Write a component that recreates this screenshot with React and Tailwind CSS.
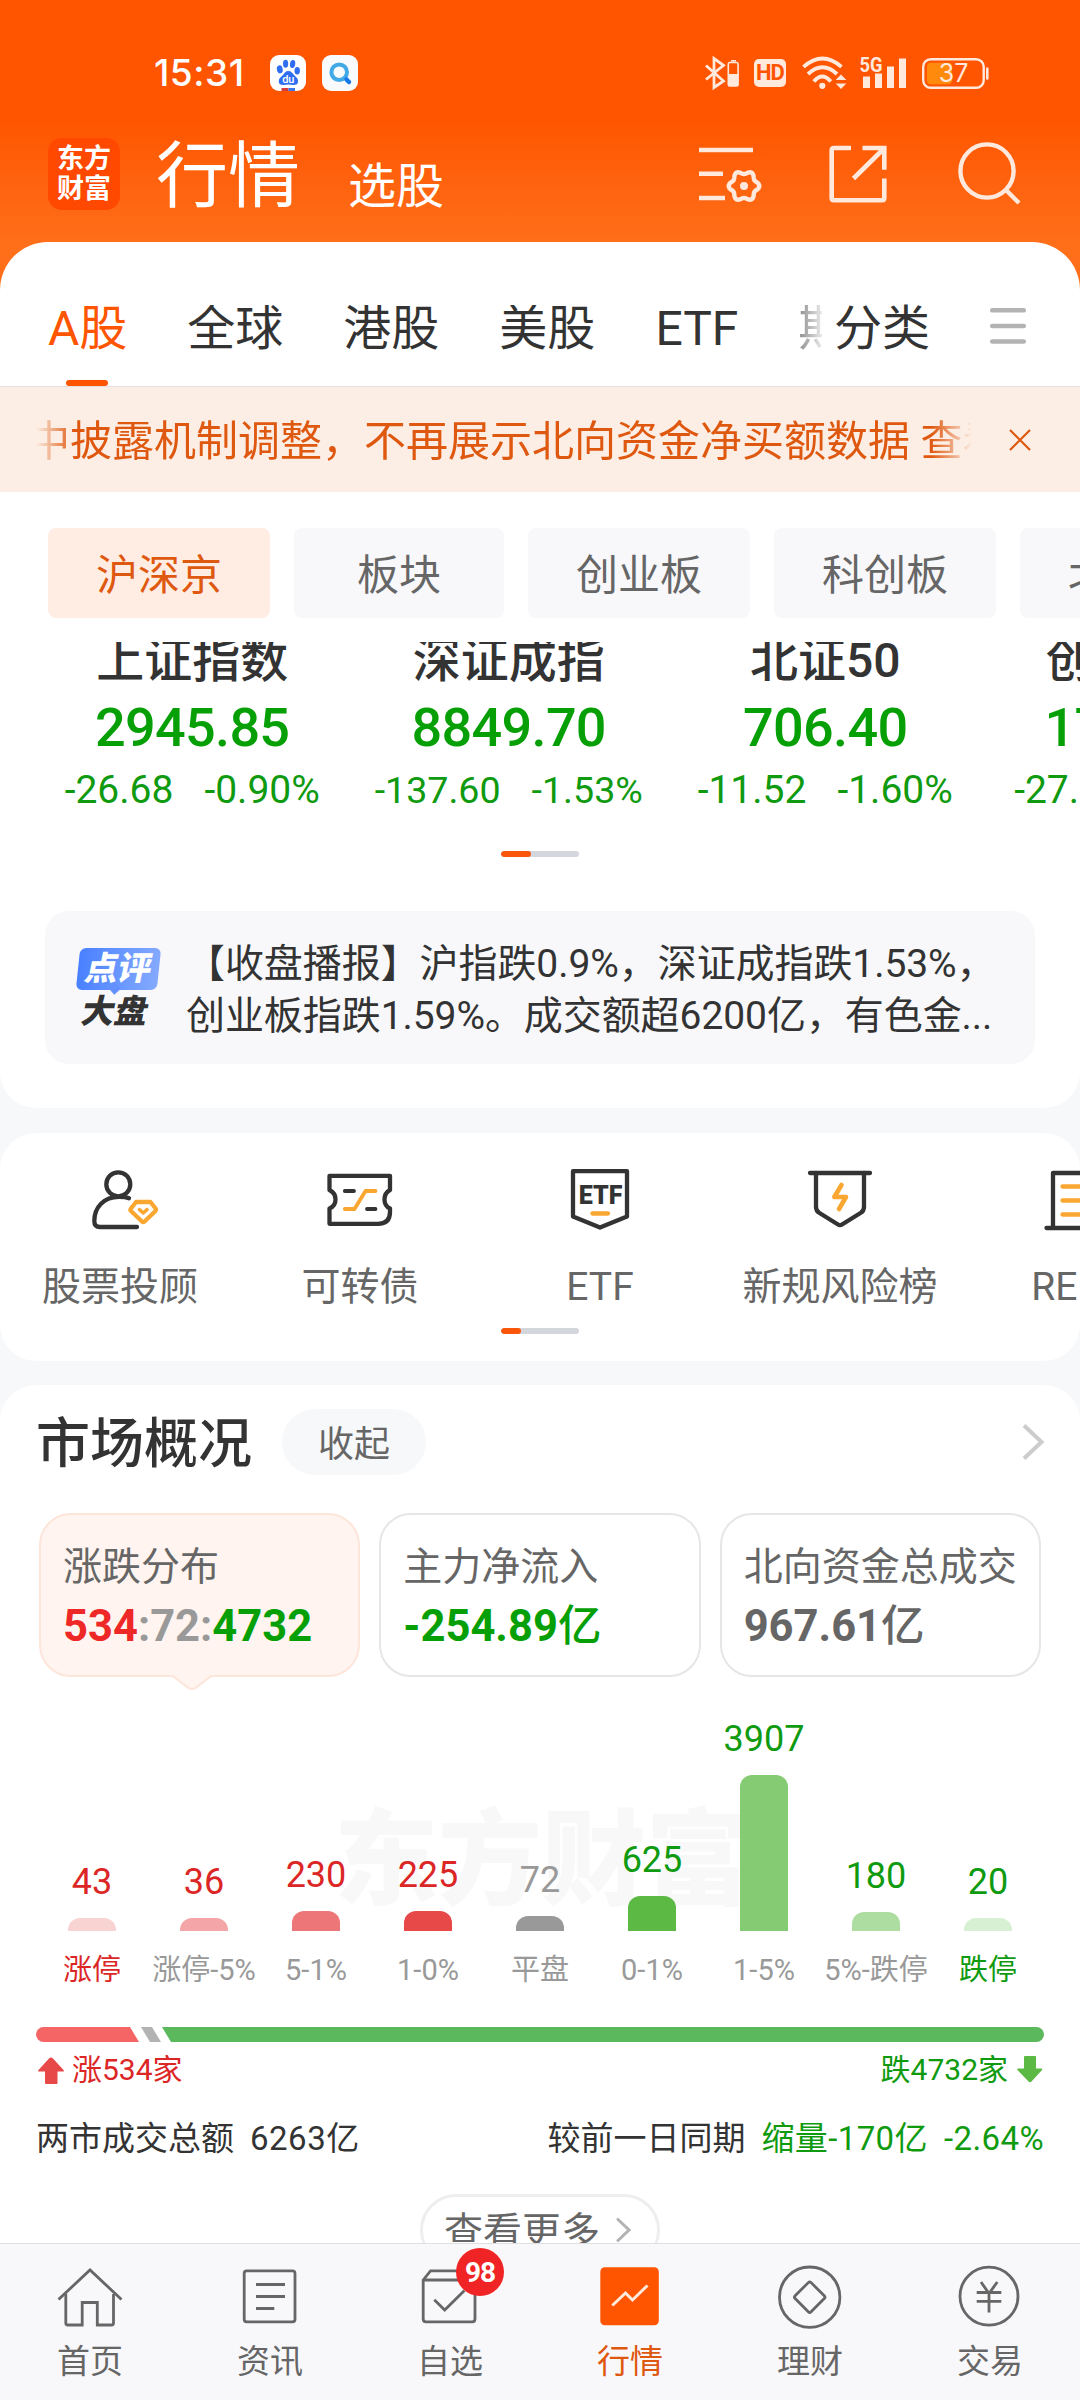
import React from 'react';

const up = '#dc2626';
const down = '#0f9a0f';

const indices = [
  { name: '上证指数', price: '2945.85', change: '-26.68', percent: '-0.90%' },
  { name: '深证成指', price: '8849.70', change: '-137.60', percent: '-1.53%', compact: true },
  { name: '北证50', price: '706.40', change: '-11.52', percent: '-1.60%' },
  { name: '创业板指', price: '1728.03', change: '-27.83', percent: '-1.59%' },
];

const distribution = [
  { label: '涨停', value: 43, height: 13, bar: '#f9d2d2', color: up, labelColor: up },
  { label: '涨停-5%', value: 36, height: 13, bar: '#f4a5a7', color: up },
  { label: '5-1%', value: 230, height: 20, bar: '#ed7778', color: up },
  { label: '1-0%', value: 225, height: 20, bar: '#e74848', color: up },
  { label: '平盘', value: 72, height: 15, bar: '#999999', color: '#999999' },
  { label: '0-1%', value: 625, height: 35, bar: '#5cb944', color: down },
  { label: '1-5%', value: 3907, height: 156, bar: '#85cb74', color: down },
  { label: '5%-跌停', value: 180, height: 19, bar: '#aedda2', color: down },
  { label: '跌停', value: 20, height: 13, bar: '#d7efd2', color: down, labelColor: down },
];

// six-lobed cog outline
const cogPath = Array.from({ length: 72 }, (_, i) => {
  const a = (i / 72) * Math.PI * 2;
  const r = 13.6 + 1.7 * Math.cos(a * 6);
  return `${i ? 'L' : 'M'}${(45 + r * Math.cos(a)).toFixed(2)} ${(42 + r * Math.sin(a)).toFixed(2)}`;
}).join('') + 'Z';

const Icon = ({ children, ...props }) => (
  <svg width="72" height="72" viewBox="0 0 72 72" fill="none" className="block shrink-0 overflow-visible" {...props}>
    {children}
  </svg>
);

const LineIcon = ({ children }) => <Icon stroke="#666666" strokeWidth="2.8">{children}</Icon>;

const ToolIcon = ({ children }) => (
  <Icon stroke="#333333" strokeWidth="4.3" strokeLinecap="round" strokeLinejoin="round">{children}</Icon>
);

const tools = [
  {
    label: '股票投顾',
    icon: (
      <ToolIcon>
        <circle cx="34.3" cy="20.3" r="12" />
        <path d="M45 34.2C42 33 38.5 32.8 35 32.8C20 32.8 10.3 43 10.3 57Q10.3 63 16 63H53" />
        <path d="M52 38H66.5L72 45Q72.5 46 71.5 47L60.5 57.5Q59.2 58.5 58 57.5L47 47Q46 46 46.6 45Z" stroke="#faa732" />
        <path d="M55.5 45.7L59.2 49L63 45.7" stroke="#faa732" strokeWidth="3.6" />
      </ToolIcon>
    ),
  },
  {
    label: '可转债',
    icon: (
      <ToolIcon>
        <path d="M5.5 11.8H66V26Q60.5 29 60.5 35.5Q60.5 42 66 44.5V48Q66 59.8 54 59.8H5.5V44.5Q11.5 42 11.5 35.5Q11.5 29 5.5 26Z" />
        <path d="M20.8 27H30M43 45H51.5" strokeWidth="3.8" />
        <path d="M20.8 45H30.5L41.5 27H51.5" stroke="#faa732" strokeWidth="3.8" />
      </ToolIcon>
    ),
  },
  {
    label: 'ETF',
    icon: (
      <ToolIcon>
        <path d="M9 7.2H63V52.5L36 63.5L9 52.5Z" />
        <text x="36.5" y="39.5" fontSize="25" fontWeight="900" fill="#333333" stroke="none" textAnchor="middle">ETF</text>
        <path d="M28.5 49.5H44" stroke="#faa732" />
      </ToolIcon>
    ),
  },
  {
    label: '新规风险榜',
    icon: (
      <ToolIcon>
        <path d="M6 9H66" />
        <path d="M12 9V43Q12 47 15.5 49L34 60.5Q36 61.8 38 60.5L56.5 49Q60 47 60 43V9" />
        <path d="M37.5 21L30.3 33H42L35 45" stroke="#faa732" strokeWidth="4.6" />
      </ToolIcon>
    ),
  },
  {
    label: 'REITs',
    icon: (
      <ToolIcon>
        <path d="M9 64V9H63V64M2.5 64H70" />
        <path d="M18.5 22.5H54M18.5 36.5H54M18.5 50.5H54" stroke="#faa732" />
      </ToolIcon>
    ),
  },
];

const navItems = [
  {
    label: '首页',
    icon: (
      <LineIcon>
        <path d="M4.5 39.5L36 10L67.5 39.5" />
        <path d="M11.8 34V63Q11.8 65 13.8 65H28.2V42.5H43.3V65H57.5Q59.5 65 59.5 63V34" />
      </LineIcon>
    ),
  },
  {
    label: '资讯',
    icon: (
      <LineIcon>
        <rect x="10.2" y="10.8" width="50.8" height="51" rx="2.5" />
        <path d="M22 24.5H51M22 36.5H51M22 48.5H40.3" />
      </LineIcon>
    ),
  },
  {
    label: '自选',
    badge: 98,
    icon: (
      <LineIcon>
        <path d="M9.2 20L16.5 10.8H53.5L61 20V59Q61 61.8 58.2 61.8H12Q9.2 61.8 9.2 59ZM9.2 20H61" />
        <path d="M20.3 39.8L30.7 50L50.5 30.5" />
      </LineIcon>
    ),
  },
  {
    label: '行情',
    active: true,
    icon: (
      <Icon>
        <rect x="6.3" y="7.3" width="58.5" height="58" rx="4.5" fill="#ff5500" />
        <path d="M18.3 45.5L31.5 33L38.5 40L53.5 25.5" stroke="#ffeade" strokeWidth="3" />
      </Icon>
    ),
  },
  {
    label: '理财',
    icon: (
      <LineIcon>
        <circle cx="35.7" cy="37.2" r="30.2" />
        <rect x="24.4" y="25.9" width="22.6" height="22.6" rx="2" transform="rotate(45 35.7 37.2)" />
      </LineIcon>
    ),
  },
  {
    label: '交易',
    icon: (
      <LineIcon>
        <circle cx="35" cy="36.2" r="29" />
        <path d="M27 22L35 33.5L43.3 22M35 32V52.5M22.7 32.5H47.3M22.7 41.3H47.3" />
      </LineIcon>
    ),
  },
];

const Pager = ({ className, thumb }) => (
  <div className={`mx-auto h-1.5 w-[78px] overflow-hidden rounded-full bg-[#d3d6dc] ${className}`}>
    <div className={`h-full rounded-full bg-[#f9560b] ${thumb}`} />
  </div>
);

function StatusBar() {
  return (
    <div className="mt-[49px] flex h-12 items-center pl-[154px] pr-[91px]">
      <span className="w-[116px] font-['Inter'] text-[37px] font-medium leading-[48px] tracking-[0.5px]">15:31</span>
      <svg width="36" height="36" viewBox="0 0 36 36" className="mr-4 rounded-[9px]">
        <rect width="36" height="36" fill="#ffffff" />
        <g fill="#2f6ef0">
          <ellipse cx="9.8" cy="14.3" rx="2.9" ry="4" transform="rotate(-12 9.8 14.3)" />
          <ellipse cx="15.6" cy="8.8" rx="2.6" ry="4" />
          <ellipse cx="22.6" cy="9" rx="2.6" ry="4" transform="rotate(10 22.6 9)" />
          <ellipse cx="27.2" cy="15.8" rx="2.7" ry="3.7" />
          <path d="M18.3 16C21 16 22.5 18 24 20C26 22 28.5 23.5 28 27C27.5 30.5 24 30.3 18.3 29.6C13 30.3 9.3 30.5 8.8 27C8.4 23.5 11 22 13 20C14.5 18 15.6 16 18.3 16Z" />
        </g>
        <text x="18.3" y="28" fontSize="11" fontWeight="500" fill="#ffffff" textAnchor="middle">du</text>
        <rect x="11.5" y="33" width="7" height="3" fill="#d93a3a" />
        <rect x="18.5" y="33" width="6.5" height="3" fill="#3f73e8" />
      </svg>
      <svg width="36" height="36" viewBox="0 0 36 36" fill="none" className="rounded-[9px]">
        <rect width="36" height="36" fill="#f9fafc" />
        <circle cx="17.2" cy="17.2" r="7.8" stroke="#41a9e6" strokeWidth="4" />
        <path d="M24.5 24.5L27 27" stroke="#1677e8" strokeWidth="4.5" strokeLinecap="round" />
      </svg>
      <div className="ml-auto flex items-center text-[#ffe8dc]">
        <svg width="36" height="36" viewBox="0 0 36 36" fill="none" stroke="currentColor" className="mr-[13px]">
          <path d="M1 10.5L18.5 26L9 32.5V3.5L18.5 10.3L1 24.5" strokeWidth="2.8" />
          <rect x="23.3" y="7.5" width="9.8" height="23.5" rx="1.5" strokeWidth="1.6" />
          <path d="M26 5.8H31" strokeWidth="1.6" />
          <path d="M23.3 19H33.1V31H23.3Z" fill="currentColor" stroke="none" />
        </svg>
        <span className="mr-4 flex h-7 w-8 items-center justify-center rounded-[5px] bg-[#ffe8dc] text-[22px] font-bold leading-7 tracking-[-1px] text-[#ff5500]">HD</span>
        <svg width="45" height="36" viewBox="0 0 45 36" fill="none" stroke="currentColor" strokeWidth="3.8" className="mr-[13px]">
          <path d="M1.5 11.8Q20.5 -5 39.5 11.8M6 19Q20.5 5.5 35 19M11.8 26.5Q20.3 16.5 28.8 26.5" />
          <path d="M39 19.5L44.3 25H33.7ZM39 34L44.3 28.5H33.7Z" fill="currentColor" stroke="none" />
          <circle cx="20.3" cy="30.8" r="3.1" fill="currentColor" stroke="none" />
        </svg>
        <svg width="46" height="36" viewBox="0 0 46 36" fill="currentColor" className="mr-4">
          <text x="-0.5" y="17" fontSize="21" fontWeight="700" textLength="23" lengthAdjust="spacingAndGlyphs">5G</text>
          <path d="M3 21.5H10V33H3ZM15 18.5H22V33H15ZM27 11.5H34V33H27ZM39 3.5H46V33H39Z" />
        </svg>
        <svg width="67" height="36" viewBox="0 0 67 36" fill="none" stroke="currentColor">
          <rect x="1.2" y="4.2" width="60.5" height="28.6" rx="7.5" strokeWidth="2.4" />
          <rect x="5" y="7.7" width="25" height="21.5" rx="4" fill="#ff8a0c" stroke="none" />
          <path d="M65.3 13.5V23.5" strokeWidth="2.6" strokeLinecap="round" />
          <text x="31.5" y="27" fontSize="25" fill="currentColor" stroke="none" textAnchor="middle" className="font-['Inter']">37</text>
        </svg>
      </div>
    </div>
  );
}

function Header() {
  return (
    <div className="flex h-[145px] items-start pl-12 pr-[58px] pt-[41px]">
      <div className="flex size-[72px] flex-col items-center justify-center rounded-[14px] bg-[#ff4800] text-[27px] font-bold leading-[30px]">
        <span>东方</span>
        <span>财富</span>
      </div>
      <h1 className="ml-9 w-[144px] text-[72px] leading-[78px]">行情</h1>
      <span className="ml-12 mt-6 text-[48px] leading-[50px]">选股</span>
      <svg width="64" height="64" viewBox="0 0 64 64" fill="none" stroke="#ffe8dc" strokeWidth="4.6" className="ml-auto mt-1.5">
        <path d="M0 6H54M0 29.8H24M0 54H26" />
        <path d={cogPath} strokeWidth="4.4" />
        <circle cx="45" cy="42" r="4" fill="#ffe8dc" stroke="none" />
      </svg>
      <svg width="58" height="58" viewBox="0 0 58 58" fill="none" stroke="#ffe8dc" strokeWidth="4.6" className="ml-[66px] mt-[7px]">
        <path d="M22 3H5Q2.7 3 2.7 5.3V53Q2.7 55.3 5 55.3H53Q55.3 55.3 55.3 53V33.5" />
        <path d="M33.5 3H55.3V24.8M24.5 33.5L54 4.5" />
      </svg>
      <svg width="64" height="64" viewBox="0 0 64 64" fill="none" stroke="#ffe8dc" strokeWidth="4.4" className="ml-[71px] mt-1">
        <circle cx="29" cy="29" r="26.6" />
        <path d="M47.5 47.5L61 61" />
      </svg>
    </div>
  );
}

function MarketTabs() {
  return (
    <div className="flex h-[145px] items-start border-b border-[#e2e0de] pl-12 pt-[63px] text-[48px] leading-[48px] text-[#333333]">
      <div className="flex w-[774px] gap-[60px] overflow-hidden whitespace-nowrap">
        <span className="relative h-[81px] text-[#ff5500]">
          A股
          <i className="absolute bottom-0 left-[18px] h-1.5 w-[42px] rounded-full bg-[#ff5500]" />
        </span>
        <span>全球</span>
        <span>港股</span>
        <span>美股</span>
        <span>ETF</span>
        <span className="bg-linear-to-r from-[#8a8a8a] to-white to-30% bg-clip-text text-transparent">期货</span>
      </div>
      <span className="ml-3">分类</span>
      <svg width="36" height="36" viewBox="0 0 36 36" stroke="#b3b3b3" strokeWidth="4.5" strokeLinecap="round" className="ml-[60px] mt-[3px]">
        <path d="M2.2 2.3H33.8M2.2 18H33.8M2.2 33.5H33.8" />
      </svg>
    </div>
  );
}

function Notice() {
  return (
    <div className="flex h-[105px] items-center bg-[#fceee5] pl-9 text-[#df580f]">
      <div className="flex w-[936px] overflow-hidden whitespace-nowrap pt-1 [mask-image:linear-gradient(90deg,transparent,black_38px,black_895px,transparent_936px)]">
        <span className="-ml-[8px] text-[42px] leading-[60px]">中披露机制调整，不再展示北向资金净买额数据 查看</span>
      </div>
      <svg width="22" height="22" viewBox="0 0 22 22" stroke="currentColor" strokeWidth="2.2" className="ml-[37px]">
        <path d="M1 1L21 21M21 1L1 21" />
      </svg>
    </div>
  );
}

function IndexPanel() {
  const boards = ['沪深京', '板块', '创业板', '科创板', '北交所'];
  return (
    <section className="rounded-b-[36px] bg-white pb-11">
      <div className="flex gap-6 overflow-hidden pl-12 pt-9">
        {boards.map((board, index) => (
          <span
            key={board}
            className={`h-[90px] min-w-[210px] shrink-0 rounded-lg px-12 text-center text-[42px] leading-[95px] ${index === 0 ? 'bg-[#ffede4] text-[#df580f]' : 'bg-[#f8f8fa] text-[#666666]'}`}
          >
            {board}
          </span>
        ))}
      </div>
      <div className="mt-6 flex overflow-hidden pl-[34px]">
        {indices.map((item) => (
          <div key={item.name} className="-mt-[5px] flex w-[316.5px] shrink-0 flex-col items-center">
            <span className="text-[48px] font-medium leading-[48px] text-[#333333]">{item.name}</span>
            <span className="mt-[15px] text-[54px] font-medium leading-[56px] tracking-[-0.7px] text-[#06a006]">{item.price}</span>
            <div className={`mt-3 flex gap-[31px] leading-[44px] text-[#0f9a0f] ${item.compact ? 'text-[37.6px]' : 'text-[39px]'}`}>
              <span>{item.change}</span>
              <span>{item.percent}</span>
            </div>
          </div>
        ))}
      </div>
      <Pager className="mt-[39px]" thumb="w-[30px]" />
      <div className="mx-[45px] mt-[54px] flex h-[153px] rounded-[24px] bg-[#f8f8fa] pl-[31px]">
        <div className="mt-[37px] flex w-[84px] flex-col items-center">
          <div className="relative h-[42px] w-[81px] -skew-x-6 rounded-[6px] bg-linear-to-r from-[#4a80ff] to-[#84aaff] text-center text-[33px] font-black leading-[42px] text-white">
            <span className="block -skew-x-6">点评</span>
            <i className="absolute -bottom-[3px] left-[35px] size-2 rotate-45 bg-[#6490ff]" />
          </div>
          <span className="mt-[2px] -ml-[6px] -skew-x-12 text-[33px] font-black leading-[40px] text-[#333333]">大盘</span>
        </div>
        <p className="ml-[26px] whitespace-nowrap pt-[27px] text-[39px] leading-[52px] tracking-[-0.07px] text-[#333333]">
          【收盘播报】沪指跌0.9%，深证成指跌1.53%，
          <br />
          创业板指跌1.59%。成交额超6200亿，有色金...
        </p>
      </div>
    </section>
  );
}

function Tools() {
  return (
    <section className="mt-[25px] h-[228px] overflow-hidden rounded-[36px] bg-white pt-[31px]">
      <div className="flex">
        {tools.map((tool) => (
          <div key={tool.label} className="flex w-60 shrink-0 flex-col items-center">
            {tool.icon}
            <span className="mt-7 text-[39px] leading-[46px] text-[#666666]">{tool.label}</span>
          </div>
        ))}
      </div>
      <Pager className="mt-[18px]" thumb="w-5" />
    </section>
  );
}

function StatCard({ label, active, children }) {
  return (
    <div className={`relative h-[164px] rounded-[32px] border-2 pl-[22px] pt-7 ${active ? 'border-[#fde5da] bg-[#fff4ef]' : 'border-[#e6e6e6] bg-white'}`}>
      <div className="whitespace-nowrap text-[39px] leading-[48px] text-[#666666]">{label}</div>
      <div className="mt-3 text-[43.5px] font-bold leading-[48px]">{children}</div>
      {active && (
        <svg width="44" height="17" viewBox="0 0 44 17" className="absolute -bottom-4 left-[129px]">
          <path d="M0 1.5L3 2L18.5 14Q22 16.5 25.5 14L41 2L44 1.5V0H0Z" fill="#fff4ef" />
          <path d="M2 1.5L18.5 14Q22 16.5 25.5 14L42 1.5" fill="none" stroke="#fde5da" strokeWidth="2" />
        </svg>
      )}
    </div>
  );
}

function Overview() {
  return (
    <section className="mt-6 rounded-t-[36px] bg-white px-9 pt-6">
      <div className="flex h-[66px] items-center">
        <h2 className="pt-[6px] text-[54px] font-medium leading-[66px] text-[#333333]">市场概况</h2>
        <span className="ml-[30px] h-[66px] w-36 rounded-full bg-[#f7f8fa] text-center text-[36px] leading-[72px] text-[#666666]">收起</span>
        <svg width="24" height="38" viewBox="0 0 24 38" fill="none" stroke="#cccccc" strokeWidth="4" className="-mr-px ml-auto">
          <path d="M3 2.5L20.5 19L3 35.5" />
        </svg>
      </div>

      <div className="ml-[3px] mr-[3px] mt-[38px] grid grid-cols-3 gap-[19px]">
        <StatCard label="涨跌分布" active>
          <span className="text-[#ee2727]">534</span>
          <span className="text-[#999999]">:72:</span>
          <span className="text-[#06a006]">4732</span>
        </StatCard>
        <StatCard label="主力净流入">
          <span className="text-[#06a006]">-254.89<span className="font-medium">亿</span></span>
        </StatCard>
        <StatCard label="北向资金总成交">
          <span className="text-[#666666]">967.61<span className="font-medium">亿</span></span>
        </StatCard>
      </div>

      <div className="relative flex h-[254px] items-end">
        <div className="absolute bottom-[4px] left-[298px] text-[104px] font-black leading-[130px] text-[#f8f8f8]">东方财富</div>
        {distribution.map((item) => (
          <div key={item.label} className="relative flex w-28 flex-col items-center">
            <span className="mb-[18px] text-[36px] leading-[36px]" style={{ color: item.color }}>{item.value}</span>
            <div className="w-12 rounded-t-[12px]" style={{ height: item.height, backgroundColor: item.bar }} />
          </div>
        ))}
      </div>
      <div className="mt-5 flex">
        {distribution.map((item) => (
          <span
            key={item.label}
            className="w-28 whitespace-nowrap text-center text-[29px] leading-[38px]"
            style={{ color: item.labelColor || '#999999' }}
          >
            {item.label}
          </span>
        ))}
      </div>

      <div className="mt-[38px] flex h-[15px] overflow-hidden rounded-full">
        <div className="w-[103px] bg-[#f66565] [clip-path:polygon(0_0,94px_0,103px_100%,0_100%)]" />
        <div className="ml-[2px] w-[20px] bg-[#b3b3b3] [clip-path:polygon(0_0,11px_0,20px_100%,9px_100%)]" />
        <div className="ml-px flex-1 bg-[#5cb85c] [clip-path:polygon(0_0,100%_0,100%_100%,9px_100%)]" />
      </div>
      <div className="mt-[10px] flex items-center justify-between text-[30px] leading-[36px]">
        <span className="flex items-center gap-2 text-[#dc2626]">
          <svg width="28" height="28" viewBox="0 0 28 28" fill="#e74848" className="mt-0.5">
            <path d="M13 1.5Q15 -0.3 17 1.5L27.5 13Q28.5 14.5 27 14.5H21.5V26Q21.5 27 20.5 27H10Q9 27 9 26V14.5H3Q1.5 14.5 2.5 13Z" />
          </svg>
          涨534家
        </span>
        <span className="flex items-center gap-2 text-[#0f9a0f]">
          跌4732家
          <svg width="28" height="28" viewBox="0 0 28 28" fill="#5cb944">
            <path d="M8 1Q8 0 9 0H19Q20 0 20 1V12.5H25.5Q27 12.5 26 14L15.5 25.5Q14 27 12.5 25.5L1.5 14Q0.5 12.5 2 12.5H8Z" />
          </svg>
        </span>
      </div>
      <div className="mt-[31px] flex text-[33px] leading-[40px] text-[#333333]">
        <span>两市成交总额</span>
        <span className="ml-4 tracking-[0.5px]">6263亿</span>
        <span className="ml-auto">较前一日同期</span>
        <span className="ml-4 tracking-[0.4px] text-[#0f9a0f]">缩量-170亿</span>
        <span className="ml-4 tracking-[0.4px] text-[#0f9a0f]">-2.64%</span>
      </div>
      <div className="mx-auto mt-[35px] flex h-[72px] w-60 items-center rounded-full border-[3px] border-[#eeeeee] pl-[21px] text-[39px] text-[#666666]">
        <span className="pt-[3px] leading-[60px]">查看更多</span>
        <svg width="15" height="24" viewBox="0 0 15 24" fill="none" stroke="#b3b3b3" strokeWidth="3" strokeLinecap="round" className="ml-4">
          <path d="M2 1.5L13 12L2 22.5" />
        </svg>
      </div>
    </section>
  );
}

function BottomNav() {
  return (
    <nav className="flex h-[157px] shrink-0 border-t border-[#e0e0e0] bg-[#f8f8fb] pt-4">
      {navItems.map((item) => (
        <div key={item.label} className={`relative flex w-[180px] flex-col items-center ${item.active ? 'text-[#df580f]' : 'text-[#666666]'}`}>
          {item.icon}
          <span className="mt-[10px] text-[33px] leading-[40px]">{item.label}</span>
          {item.badge && (
            <span className="absolute -top-3 left-24 size-12 rounded-full bg-[#f02424] text-center text-[28px] font-bold leading-[49px] tracking-[-1px] text-white">
              {item.badge}
            </span>
          )}
        </div>
      ))}
    </nav>
  );
}

export default function App() {
  return (
    <div className="flex h-[2400px] w-[1080px] flex-col overflow-hidden bg-[#f7f8fa] font-['Roboto','Noto_Sans_CJK_SC',sans-serif]">
      <div className="min-h-0 flex-1 overflow-hidden">
        <div className="h-[290px] bg-linear-to-b from-[#ff5500] from-[120px] to-[#ff6e18] to-[242px] text-white">
          <div className="flow-root">
            <StatusBar />
          </div>
          <Header />
        </div>
        <div className="-mt-12 rounded-t-[48px] bg-white">
          <MarketTabs />
          <Notice />
        </div>
        <IndexPanel />
        <Tools />
        <Overview />
      </div>
      <BottomNav />
    </div>
  );
}
